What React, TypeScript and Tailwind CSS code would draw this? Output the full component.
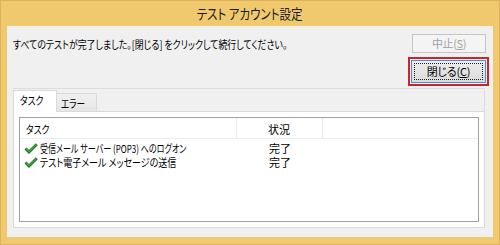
import React from "react";

function Check() {
  return (
    <svg width="14" height="11" viewBox="0 0 14 11" className="shrink-0">
      <path d="M1.5 5.5 L5 9 L12.8 1.2" stroke="#1E6E1E" strokeWidth="2.8" fill="none" strokeLinejoin="miter" />
      <path d="M1.8 5.6 L5 8.6 L12.5 1.4" stroke="#3FAE3F" strokeWidth="1.3" fill="none" />
    </svg>
  );
}

export default function App() {
  return (
    <div className="w-[500px] h-[245px] bg-[#F0C96F] border border-[#DDB25A] flex flex-col font-['Noto_Sans_CJK_JP','Noto_Sans',sans-serif] [font-feature-settings:'palt'] text-black">
      <div className="h-[25px] flex items-center justify-center text-[14px] text-[#1a1a1a] whitespace-nowrap">
        <span className="inline-block scale-x-[0.82] origin-center">テスト アカウント設定</span>
      </div>
      <div className="mx-[6px] mb-[7px] flex-1 bg-[#F0F0F0] flex flex-col">
        <div className="h-[62px] flex justify-between">
          <div className="pl-[6px] pt-[11px] text-[11px] leading-[14px] whitespace-nowrap">
            <span className="inline-block origin-left scale-x-[0.81]">
              すべてのテストが完了しました。[閉じる] をクリックして続行してください。
            </span>
          </div>
          <div className="flex flex-col items-end">
            <div className="mt-[8px] mr-[7px] w-[74px] h-[19px] border border-[#C6C6C6] bg-[#F4F4F4] text-[#A3A3A3] text-[11px] tracking-[-0.4px] flex items-center justify-center">
              中止(<span className="underline">S</span>)
            </div>
            <div className="mt-[4px] mr-[4px] w-[81px] h-[29px] border-2 border-[#C8252D] p-[1px]">
              <div className="w-full h-full border border-[#4A90D0] bg-gradient-to-b from-[#ECECEC] to-[#DCDCDC] p-[2px]">
                <div className="w-full h-full border border-dotted border-[#222] flex items-center justify-center text-[11px] tracking-[-0.2px]">
                  閉じる(<span className="underline">C</span>)
                </div>
              </div>
            </div>
          </div>
        </div>
        <div className="ml-[6px] mr-[8px] border-t border-[#DCDCDC] flex flex-col">
          <div className="mt-[1px] h-[21px] flex items-start border-r border-[#D9D9D9]">
            <div className="relative z-10 h-[22px] w-[44px] border border-b-0 border-[#D9D9D9] bg-white text-[11px] pl-[6px] pt-[2px] leading-[14px] whitespace-nowrap">
              <span className="inline-block origin-left scale-x-[0.8]">タスク</span>
            </div>
            <div className="mt-[3px] h-[18px] w-[40px] border border-l-0 border-[#D9D9D9] border-b-0 bg-gradient-to-b from-[#F0F0F0] to-[#E5E5E5] text-[11px] pl-[4px] pt-[2px] leading-[14px] whitespace-nowrap">
              <span className="inline-block origin-left scale-x-[0.78]">エラー</span>
            </div>
          </div>
          <div className="h-[117px] border border-[#D9D9D9] bg-white p-[5px] flex flex-col">
            <div className="flex-1 border border-[#9DA1A6] bg-white flex flex-col text-[11px] whitespace-nowrap">
              <div className="h-[21px] flex border-b border-[#E8EEF5]">
                <div className="w-[217px] border-r border-[#E3ECF5] pl-[6px] pt-[4px] leading-[14px]">
                  <span className="inline-block origin-left scale-x-[0.8]">タスク</span>
                </div>
                <div className="w-[86px] border-r border-[#E3ECF5] pl-[31px] pt-[4px] leading-[14px]">状況</div>
              </div>
              <div className="pt-[2px] flex flex-col">
                <div className="h-[14px] flex items-center">
                  <div className="w-[217px] pl-[4px] flex items-center gap-[2px] leading-[14px]">
                    <Check />
                    <span className="inline-block origin-left scale-x-[0.73]">受信メール サーバー (POP3) へのログオン</span>
                  </div>
                  <div className="pl-[32px] leading-[14px]">完了</div>
                </div>
                <div className="h-[14px] flex items-center">
                  <div className="w-[217px] pl-[4px] flex items-center gap-[2px] leading-[14px]">
                    <Check />
                    <span className="inline-block origin-left scale-x-[0.82]">テスト電子メール メッセージの送信</span>
                  </div>
                  <div className="pl-[32px] leading-[14px]">完了</div>
                </div>
              </div>
            </div>
          </div>
        </div>
      </div>
    </div>
  );
}
